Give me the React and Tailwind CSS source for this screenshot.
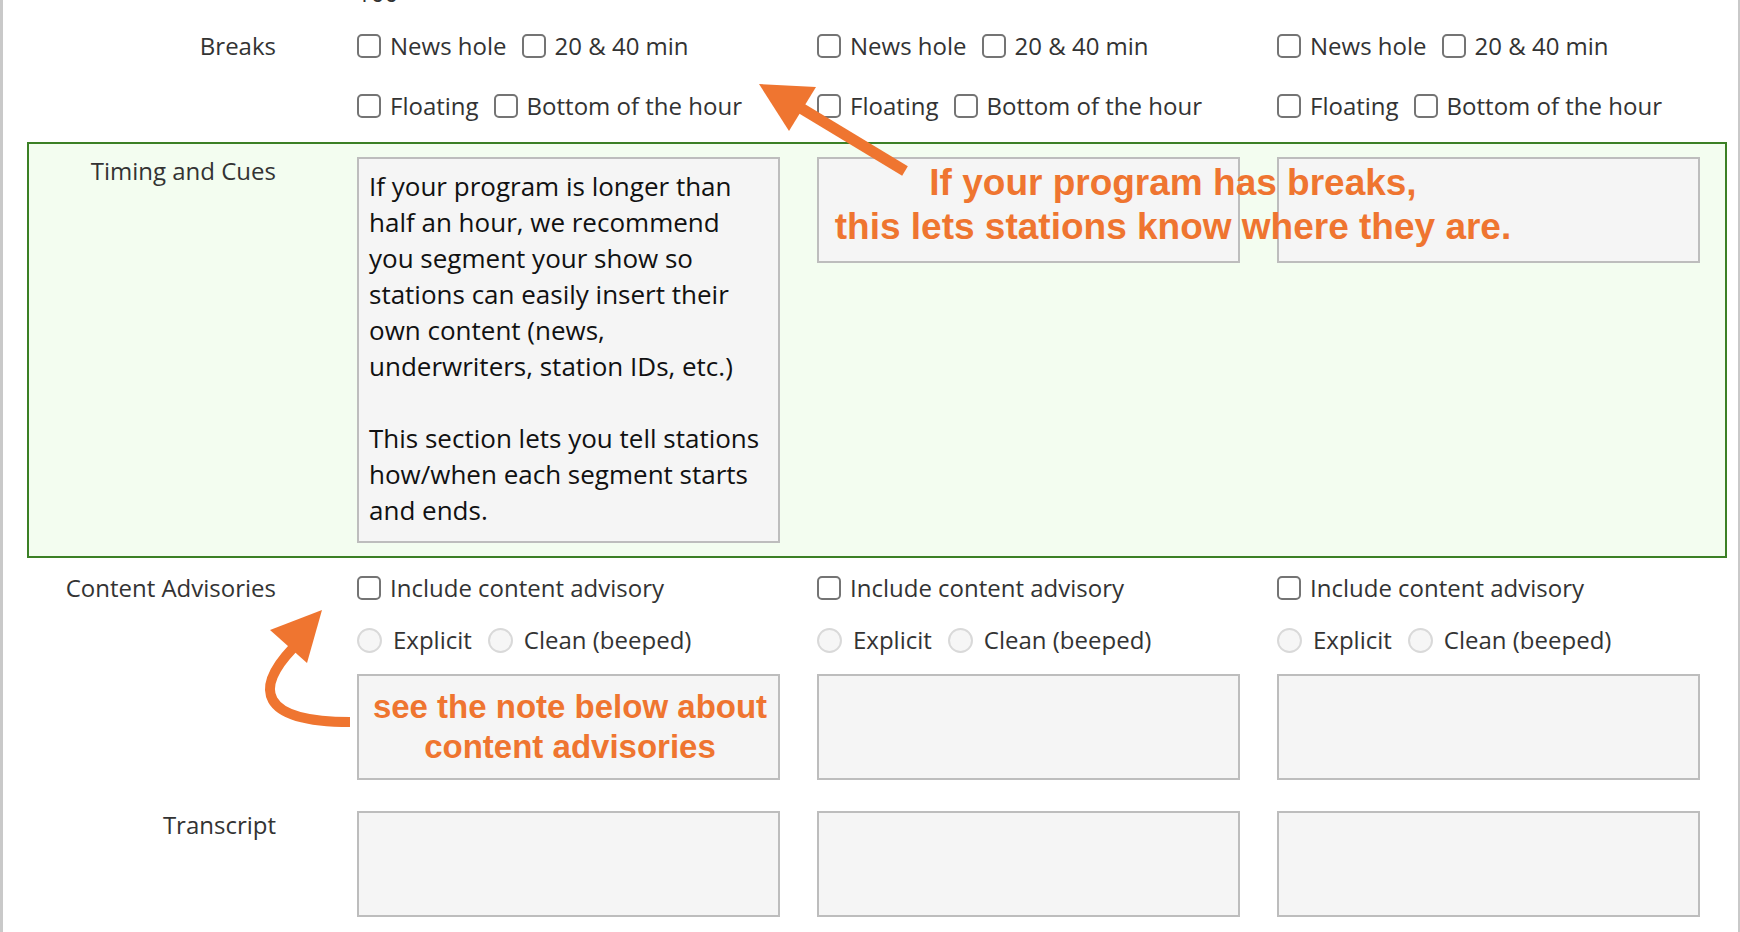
import React from 'react';

const Box = ({ className = '', children }) => (
  <div className={`border-2 border-[#bdbdbd] bg-[#f5f5f5] ${className}`}>{children}</div>
);

const Check = ({ label }) => (
  <span className="flex items-center gap-[9px]">
    <span className="w-[24px] h-[24px] shrink-0 rounded-[5px] border-2 border-[#747474] bg-white" />
    <span>{label}</span>
  </span>
);

const Radio = ({ label }) => (
  <span className="flex items-center gap-[11px]">
    <span className="w-[25px] h-[25px] shrink-0 rounded-full border-2 border-[#d9d9d9] bg-[#f6f6f6]" />
    <span>{label}</span>
  </span>
);

const Row = ({ label, labelWidth = 'w-[273px]', className = '', children }) => (
  <div className={`flex ${className}`}>
    <div className={`${labelWidth} shrink-0 text-right leading-[28px]`}>{label}</div>
    <div className="ml-[81px] grid grid-cols-[423px_423px_423px] gap-x-[37px]">{children}</div>
  </div>
);

const cols = [0, 1, 2];

export default function App() {
  return (
    <div className="relative w-[1740px] h-[932px] overflow-hidden bg-white border-l-[3px] border-r-[2px] border-[#c9c9c9] font-['Open_Sans',sans-serif] text-[24px] text-[#333]">
      {/* tail of the row above, cut off by the top edge */}
      <div className="h-[5px] overflow-hidden pl-[354px]">
        <div className="-mt-[21px] leading-[28px]">100</div>
      </div>

      {/* Breaks */}
      <Row label="Breaks" className="mt-[27px]">
        {cols.map((c) => (
          <div key={c} className="flex flex-col gap-[32px]">
            <div className="flex items-center gap-[15px] h-[28px]">
              <Check label="News hole" />
              <Check label="20 & 40 min" />
            </div>
            <div className="flex items-center gap-[15px] h-[28px]">
              <Check label="Floating" />
              <Check label="Bottom of the hour" />
            </div>
          </div>
        ))}
      </Row>

      {/* Timing and Cues */}
      <div className="mt-[22px] ml-[24px] w-[1700px] border-2 border-[#3b8025] bg-[#f3fdf0] py-[13px]">
        <Row label="Timing and Cues" labelWidth="w-[247px]">
          <Box className="h-[386px] px-[10px] pt-[9px] text-[26px] text-[#111] leading-[36px]">
            <p>
              If your program is longer than half an hour, we recommend you segment your show so
              stations can easily insert their own content (news, underwriters, station IDs, etc.)
            </p>
            <p className="mt-[36px]">
              This section lets you tell stations how/when each segment starts and ends.
            </p>
          </Box>
          <Box className="h-[106px]" />
          <Box className="h-[106px]" />
        </Row>
      </div>

      {/* Content Advisories */}
      <Row label="Content Advisories" className="mt-[16px]">
        {cols.map((c) => (
          <div key={c} className="flex flex-col">
            <div className="flex items-center h-[28px]">
              <Check label="Include content advisory" />
            </div>
            <div className="flex items-center gap-[16px] h-[28px] mt-[24px]">
              <Radio label="Explicit" />
              <Radio label="Clean (beeped)" />
            </div>
            <Box className="h-[106px] mt-[20px]" />
          </div>
        ))}
      </Row>

      {/* Transcript */}
      <Row label="Transcript" className="mt-[31px]">
        {cols.map((c) => (
          <Box key={c} className="h-[106px]" />
        ))}
      </Row>

      {/* annotations drawn over the form */}
      <svg
        className="absolute left-[-3px] top-0 pointer-events-none"
        width="1740"
        height="932"
        viewBox="0 0 1740 932"
      >
        <line x1="905" y1="171" x2="799" y2="107" stroke="#ef7530" strokeWidth="11" />
        <polygon points="759,84 816,87 789,131" fill="#ef7530" />
        <path d="M 293 648 C 255 688, 258 722, 350 722" fill="none" stroke="#ef7530" strokeWidth="10" />
        <polygon points="322,610 270,630 307,663" fill="#ef7530" />
      </svg>

      <div className="absolute left-[770px] top-[161px] w-[800px] text-center whitespace-nowrap font-['Liberation_Sans',Arial,sans-serif] font-bold text-[37px] leading-[44px] text-[#ef7530]">
        If your program has breaks,
        <br />
        this lets stations know where they are.
      </div>

      <div className="absolute left-[317px] top-[687px] w-[500px] text-center whitespace-nowrap font-['Liberation_Sans',Arial,sans-serif] font-bold text-[33px] leading-[40px] text-[#ef7530]">
        see the note below about
        <br />
        content advisories
      </div>
    </div>
  );
}
